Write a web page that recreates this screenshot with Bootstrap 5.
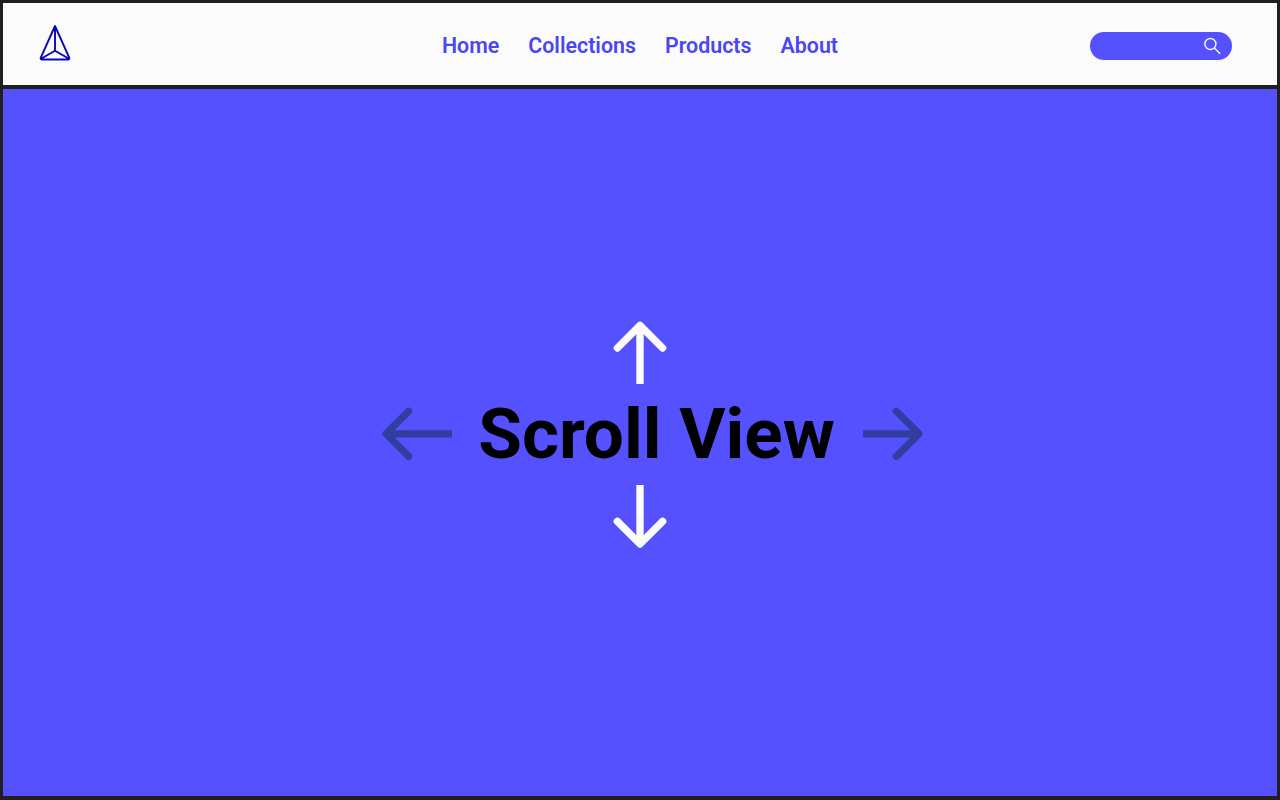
<!DOCTYPE html>
<html lang="en">

<head>
    <meta charset="UTF-8">
    <meta name="viewport" content="width=device-width, initial-scale=1.0">
    <title>Scroll View</title>

    <!-- Bootstrap CSS CDN -->
    <link href="https://cdn.jsdelivr.net/npm/bootstrap@5.3.2/dist/css/bootstrap.min.css" rel="stylesheet">

    <style>
        body {
            font-family: Roboto, sans-serif;
            background: #211f20;
            height: 100vh;
            padding: 3px 3px 4px 3px;
            overflow: hidden;
        }

        .navbar {
            background: #fbfbfb;
            height: 82px;
            padding: 4px 45px 0 36px;
            margin-bottom: 4px;
        }

        .side-slot {
            flex: 1 1 0;
        }

        .main-links {
            gap: 29px;
            margin-left: 9px;
        }

        .main-links .nav-link {
            color: #4a46f4;
            font-size: 21.4px;
            font-weight: 600;
            line-height: 30px;
            padding: 0;
        }

        .search-pill {
            background: #5551ff;
            width: 142px;
            height: 28px;
            padding-right: 11px;
        }

        .hero {
            background: #5551ff;
            padding-bottom: 16px;
        }

        .title-row {
            gap: 27px;
            height: 100px;
            margin-left: 25px;
        }

        .title-row h1 {
            font-size: 71px;
            font-weight: 700;
            line-height: 84px;
            margin: 0 1px 1px -1px;
            color: #000;
        }

        .arrow-light {
            color: #fbfbfb;
        }

        .arrow-dark {
            color: #313ea0;
        }
    </style>
</head>

<body class="d-flex flex-column">

    <nav class="navbar flex-nowrap flex-shrink-0">
        <div class="side-slot">
            <a href="#" class="d-inline-block lh-1" aria-label="Home page">
                <svg class="d-block" width="34" height="38" viewBox="0 0 34 38" fill="none" stroke="#0a06b8" stroke-width="1.9" stroke-linejoin="round">
                    <path d="M16 2 L30.2 33.6 Q30.8 35.5 29 35.5 H3 Q1.2 35.5 1.8 33.6 Z M16 2 V26.7 L2 34.8 M16 26.7 L30 34.8" />
                </svg>
            </a>
        </div>
        <ul class="nav main-links flex-nowrap">
            <li class="nav-item"><a class="nav-link" href="#">Home</a></li>
            <li class="nav-item"><a class="nav-link" href="#">Collections</a></li>
            <li class="nav-item"><a class="nav-link" href="#">Products</a></li>
            <li class="nav-item"><a class="nav-link" href="#">About</a></li>
        </ul>
        <div class="side-slot d-flex justify-content-end">
            <div class="search-pill rounded-pill d-flex align-items-center justify-content-end" role="search">
                <svg width="18" height="18" viewBox="0 0 18 18" fill="none" stroke="#fbfbfb" stroke-width="1.4">
                    <circle cx="7.4" cy="7" r="5.5" />
                    <path d="M11.3 11 L17.2 16.8" />
                </svg>
            </div>
        </div>
    </nav>

    <main class="hero flex-grow-1 d-flex flex-column align-items-center justify-content-center">
        <svg class="arrow-light" width="54" height="64" viewBox="0 0 54 64" fill="none" stroke="currentColor" stroke-width="7.4">
            <path d="M27 5.4 V64" />
            <path d="M4.4 28 L27 5.4 L49.6 28" stroke-linecap="round" stroke-linejoin="round" />
        </svg>
        <div class="title-row d-flex align-items-center">
            <svg class="arrow-dark" width="71" height="54" viewBox="0 0 71 54" fill="none" stroke="currentColor" stroke-width="7.2">
                <path d="M5 26.8 H71" />
                <path d="M27.6 4.2 L5 26.8 L27.6 49.4" stroke-linecap="round" stroke-linejoin="round" />
            </svg>
            <h1 class="text-nowrap">Scroll View</h1>
            <svg class="arrow-dark" width="61" height="54" viewBox="0 0 61 54" fill="none" stroke="currentColor" stroke-width="7.2">
                <path d="M0 26.8 H56" />
                <path d="M33.4 4.2 L56 26.8 L33.4 49.4" stroke-linecap="round" stroke-linejoin="round" />
            </svg>
        </div>
        <svg class="arrow-light" width="54" height="65" viewBox="0 0 54 65" fill="none" stroke="currentColor" stroke-width="7.4">
            <path d="M27 1 V60" />
            <path d="M4.4 37.4 L27 60 L49.6 37.4" stroke-linecap="round" stroke-linejoin="round" />
        </svg>
    </main>

    <!-- Bootstrap JS Bundle CDN -->
    <script src="https://cdn.jsdelivr.net/npm/bootstrap@5.3.2/dist/js/bootstrap.bundle.min.js"></script>
</body>

</html>
